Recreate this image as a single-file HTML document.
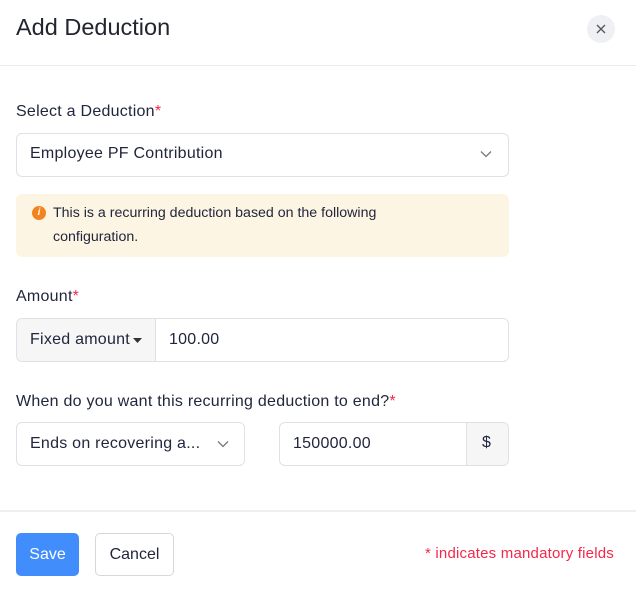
<!DOCTYPE html>
<html><head><style>
*{box-sizing:border-box;margin:0;padding:0}
body{width:636px;height:606px;background:#fff;font-family:"Liberation Sans",sans-serif;color:#21263c;position:relative;overflow:hidden}
.a{position:absolute}
.t{font-size:16px;letter-spacing:0.25px;color:#21263c}
.box{position:absolute;border:1px solid #dfe1e6;border-radius:6px;background:#fff}
.req{color:#f4284a}
</style></head><body>
<div class="a" style="left:16px;top:14px;font-size:23.5px;color:#22252e">Add Deduction</div>
<div class="a" style="left:587px;top:15px;width:28px;height:28px;border-radius:50%;background:#eef0f4"></div>
<svg class="a" style="left:595px;top:23px" width="12" height="12" viewBox="0 0 12 12"><path d="M2 2L10 10M10 2L2 10" stroke="#555" stroke-width="1.3"/></svg>
<div class="a" style="left:0;top:65px;width:636px;height:1px;background:#e9eaee"></div>

<div class="a t" style="left:16px;top:103px">Select a Deduction<span class="req">*</span></div>
<div class="box" style="left:16px;top:133px;width:493px;height:44px"></div>
<div class="a t" style="left:30px;top:145px">Employee PF Contribution</div>
<svg class="a" style="left:480px;top:150px" width="12" height="8" viewBox="0 0 12 8"><path d="M1 1.5L6 6.5L11 1.5" stroke="#777" stroke-width="1.3" fill="none"/></svg>

<div class="a" style="left:16px;top:194px;width:493px;height:63px;background:#fdf5e4;border-radius:6px"></div>
<div class="a" style="left:32px;top:206px;width:14px;height:14px;border-radius:50%;background:#f2831f;color:#fff;font-size:10px;font-weight:bold;font-style:italic;text-align:center;line-height:14px">i</div>
<div class="a" style="left:53px;top:201px;font-size:14.2px;line-height:24px;color:#21263c;width:400px">This is a recurring deduction based on the following configuration.</div>

<div class="a t" style="left:16px;top:288px">Amount<span class="req">*</span></div>
<div class="box" style="left:16px;top:318px;width:493px;height:44px;overflow:hidden">
<div class="a" style="left:0;top:0;width:139px;height:42px;background:#f6f6f7;border-right:1px solid #dfe1e6"></div></div>
<div class="a t" style="left:30px;top:331px">Fixed amount</div>
<svg class="a" style="left:133px;top:338px" width="9" height="5"><path d="M0 0L9 0L4.5 5Z" fill="#333"/></svg>
<div class="a t" style="left:169px;top:331px">100.00</div>

<div class="a t" style="left:16px;top:393px">When do you want this recurring deduction to end?<span class="req">*</span></div>
<div class="box" style="left:16px;top:422px;width:229px;height:44px"></div>
<div class="a t" style="left:30px;top:435px">Ends on recovering a...</div>
<svg class="a" style="left:217px;top:440px" width="12" height="8" viewBox="0 0 12 8"><path d="M1 1.5L6 6.5L11 1.5" stroke="#777" stroke-width="1.3" fill="none"/></svg>
<div class="box" style="left:279px;top:422px;width:230px;height:44px;overflow:hidden">
<div class="a" style="left:186px;top:0;width:44px;height:42px;background:#f6f6f7;border-left:1px solid #dfe1e6"></div></div>
<div class="a t" style="left:293px;top:435px">150000.00</div>
<div class="a t" style="left:482px;top:434px">$</div>

<div class="a" style="left:0;top:510px;width:636px;height:2px;background:#eeeff2"></div>
<div class="a" style="left:16px;top:533px;width:63px;height:43px;background:#408dfb;border-radius:5px;color:#fff;font-size:16px;text-align:center;line-height:44px">Save</div>
<div class="a" style="left:95px;top:533px;width:79px;height:43px;border:1px solid #d5d7dc;border-radius:5px;font-size:16px;text-align:center;line-height:42px;color:#21263c">Cancel</div>
<div class="a" style="right:22px;top:545px;font-size:15px;letter-spacing:0.2px;color:#f4284a">* indicates mandatory fields</div>
</body></html>
